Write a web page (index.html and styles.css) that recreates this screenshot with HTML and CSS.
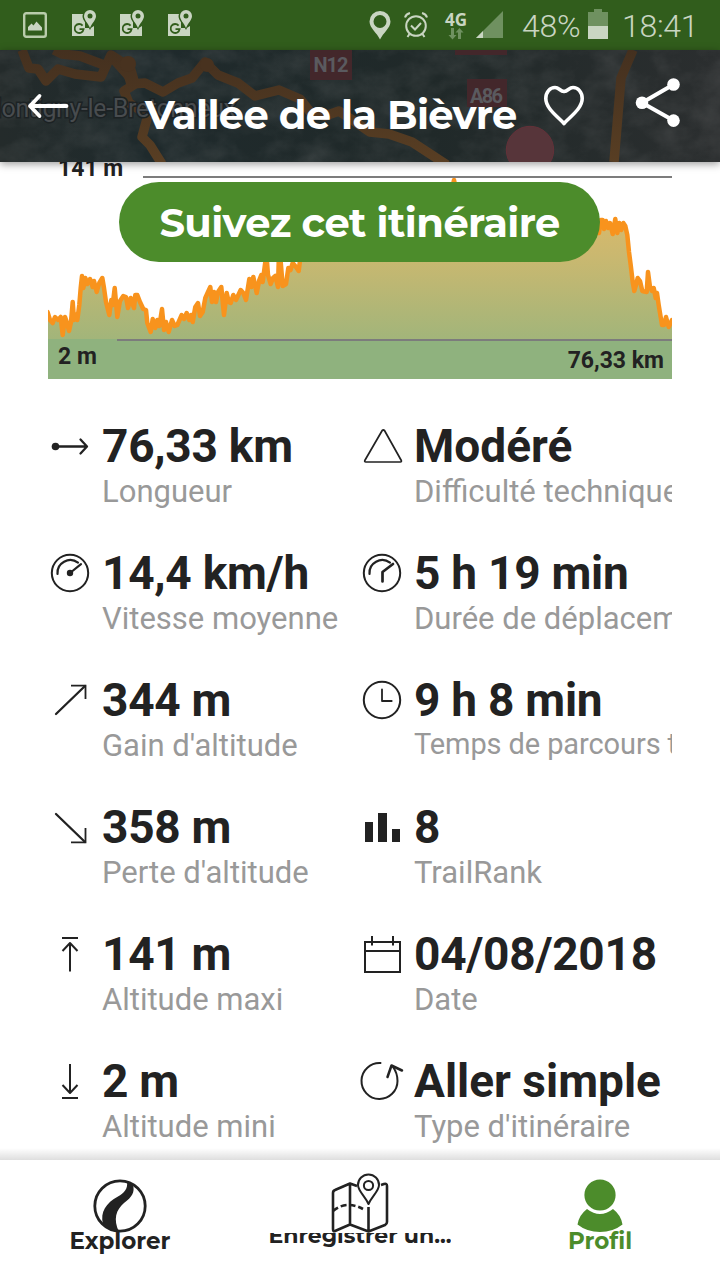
FILE: index.html
```html
<!DOCTYPE html>
<html lang="fr">
  <head>
    <meta charset="UTF-8" />
    <meta name="viewport" content="width=device-width, initial-scale=1.0" />
    <title>Vallée de la Bièvre</title>
    <link rel="stylesheet" href="styles.css">
  </head>
  <body>
    <div class="status-bar">
      <div class="status-left">
        <svg class="photo-icon" width="24" height="26" viewBox="0 0 24 26">
          <rect x="1.2" y="1.2" width="21.6" height="23.6" rx="2" fill="none" stroke="#b9ccab" stroke-width="2.4" />
          <path d="M5 18.500V15l3.500-3.500 2 2 3-4 5.500 6v3z" fill="#c9d5c2" />
        </svg>
        <svg class="maps-icon" width="24" height="27" viewBox="0 0 24 27"><use href="#gmaps" /></svg>
        <svg class="maps-icon" width="24" height="27" viewBox="0 0 24 27"><use href="#gmaps" /></svg>
        <svg class="maps-icon" width="24" height="27" viewBox="0 0 24 27">
          <g id="gmaps">
            <path d="M0 4h13v14h9v8H0zM22 16v3h-5z" fill="#c9d5c2" />
            <path d="M18 -1.500a7.500 7.500 0 0 1 7.500 7.500c0 5-5 8-7.500 14-2.500-6-7.500-9-7.500-14a7.500 7.500 0 0 1 7.500-7.500z" fill="#315d1c" />
            <path d="M10.600 15.600a4.500 4.500 0 1 0 1 3.600H7.500" fill="none" stroke="#315d1c" stroke-width="1.800" />
            <path d="M18 0a6 6 0 0 1 6 6c0 4-4 7-6 12-2-5-6-8-6-12a6 6 0 0 1 6-6z" fill="#c9d5c2" />
            <circle cx="18" cy="6" r="2.500" fill="#315d1c" />
          </g>
        </svg>
      </div>
      <div class="status-right">
        <svg class="pin-icon" width="22" height="29" viewBox="0 0 22 29">
          <path d="M11 0a10.500 10.500 0 0 1 10.500 10.500C21.500 17 14 22 11 28.500 8 22 .5 17 .5 10.500A10.500 10.500 0 0 1 11 0zM11 4a6.500 6.500 0 1 0 0 13 6.500 6.500 0 0 0 0-13z" fill="#c9d5c2" />
        </svg>
        <svg class="alarm-icon" width="24" height="26" viewBox="0 0 24 26" fill="none" stroke="#c9d5c2" stroke-width="2">
          <circle cx="12" cy="14" r="9.800" />
          <path d="M7 13.500l4 4 6-6.500M1 5.500Q2 2 6 1M23 5.500Q22 2 18 1M5.500 22l-2 3M18.500 22l2 3" />
        </svg>
        <div class="network">
          <span>4G</span>
          <svg width="16" height="12" viewBox="0 0 16 12" fill="#6f9160">
            <path d="M3 0h3v7h2.500l-4 4.500L.5 7H3zM10 11V4.500H7.500l4-4.500 4 4.500H13V11z" />
          </svg>
        </div>
        <svg class="signal-icon" width="28" height="27" viewBox="0 0 28 27">
          <path d="M27 0v27H0z" fill="#6f9160" />
          <path d="M7 20v7H0z" fill="#c9d5c2" />
        </svg>
        <span class="battery-text">48%</span>
        <svg class="battery-icon" width="20" height="30" viewBox="0 0 20 30">
          <path d="M6 0h8v3h6v14H0V3h6z" fill="#6f9160" />
          <path d="M0 17h20v13H0z" fill="#c9d5c2" />
        </svg>
        <span class="clock">18:41</span>
      </div>
    </div>

    <header class="header">
      <svg class="map" width="720" height="112" viewBox="0 50 720 112">
        <defs>
          <linearGradient id="land" x1="0" x2="1" y1="0" y2="0">
            <stop offset="0" stop-color="#242b2b" />
            <stop offset=".2" stop-color="#1f2a2c" />
            <stop offset=".6" stop-color="#202929" />
            <stop offset="1" stop-color="#2b2e2f" />
          </linearGradient>
          <linearGradient id="road" gradientUnits="userSpaceOnUse" x1="0" x2="0" y1="50" y2="162">
            <stop offset="0" stop-color="#44301f" />
            <stop offset="1" stop-color="#583e23" />
          </linearGradient>
          <filter id="ground" x="0" y="0" width="100%" height="100%">
            <feTurbulence type="fractalNoise" baseFrequency=".03 .04" numOctaves="5" seed="8" />
            <feColorMatrix values="0 0 0 0 .25  0 0 0 0 .25  0 0 0 0 .25  1.200 0 0 0 -.4" />
          </filter>
        </defs>
        <rect y="50" width="720" height="112" fill="url(#land)" />
        <rect y="50" width="720" height="112" filter="url(#ground)" opacity=".28" />
        <g fill="none" stroke="url(#road)" stroke-width="9.500" stroke-linejoin="round">
          <path d="M22 50l7 18 9 1 8 12 12-12 17 5 26 3 10-22 14 9 6 20 14-1 18 9 15-9 14-5 13-16 13 13 20 8 17 13 24-6 21 9 11 14 14 3 14-5 31 21 19 2 23 8 35 23" />
          <path d="M54 50l8 4 18 2 24 9M128 60l7 24-11 7 5 12 19 12-6 22 8 8 12 19M110 55l24 27" />
          <path d="M633 50l-12 28-7 84" />
        </g>
        <circle cx="128" cy="64" r="8" fill="#48321f" />
        <circle cx="207" cy="65" r="7" fill="#48321f" />
        <text class="map-town" x="-20" y="117" textLength="256">Montigny-le-Bretonneux</text>
        <path d="M310 50h42v30h-42zM455 50h52v5h-52zM467 79h40v28h-40z" fill="#43272b" />
        <text class="map-road" x="313.500" y="72" textLength="35">N12</text>
        <text class="map-road" x="470" y="103" textLength="33">A86</text>
        <circle cx="530" cy="150" r="23.700" fill="#57353a" stroke="#643139" />
      </svg>
      <div class="header-content">
        <svg class="back" width="42" height="26" viewBox="0 0 42 26" fill="none" stroke="#fff" stroke-width="3.800" stroke-linecap="round" stroke-linejoin="round">
          <path d="M39.500 13H3M12.500 3L3 13l9.500 10" />
        </svg>
        <h1>Vallée de la Bièvre</h1>
        <svg class="heart" width="42" height="42" viewBox="0 0 42 42" fill="none" stroke="#fff" stroke-width="3.600" stroke-linejoin="round">
          <path d="M21 38.500C16 32.500 2.800 24 2.800 13.500 2.800 7 7 2.500 12 2.500c4 0 5 3.500 9 4 4-.5 5-4 9-4 5 0 9.200 4.500 9.200 11C39.200 24 26 32.500 21 38.500z" />
        </svg>
        <svg class="share" width="46" height="50" viewBox="0 0 46 50" fill="#fff">
          <path d="M38.500 7.500L7 25.800l31.500 17.800" fill="none" stroke="#fff" stroke-width="4" />
          <circle cx="38.500" cy="7.500" r="6.300" />
          <circle cx="7" cy="25.800" r="6.300" />
          <circle cx="38.500" cy="43.600" r="6.300" />
        </svg>
      </div>
    </header>

    <main class="content">
      <div class="profile">
        <svg class="chart" width="624" height="217" viewBox="48 162 624 217">
          <defs>
            <linearGradient id="elevation" gradientUnits="userSpaceOnUse" x1="0" x2="0" y1="177" y2="339">
              <stop offset="0" stop-color="#e8b966" />
              <stop offset=".5" stop-color="#c9b870" />
              <stop offset="1" stop-color="#a2b57a" />
            </linearGradient>
          </defs>
          <!-- closes below and beside the view, so only the profile line shows -->
          <path fill="url(#elevation)" stroke="#f8931d" stroke-width="4.500" stroke-linejoin="round" d="M40 312H47.500L50 320 52.700 323 55 317 58 320 60.700 317 62.700 335 65 317 66.700 322 69 331 71 322 72.700 302 74 320 76 315 77.300 320 79.300 305 80.700 288 82 276 83.300 288 85.300 278 87.300 284 90 279 92.700 287 94 281 96.700 292 99.300 283 102.300 278 104 288 106 302 109.300 315 111.300 300 112.700 305 114.700 288 117.300 317 120 301 123.300 296 126 297 128 308 130.700 298 134 308 135.300 295 137.300 295 140 302 143.300 309 146 310 147.300 323 150.700 332 152.700 319 155.300 328 157.300 320 159.300 326 162 309 164 330 166 322 168.700 332 172 320 174.700 326 177.300 325 181.700 315 184 319 186.700 313 189.300 320 191 315 192.700 322 195.300 307 198 303 200 316 202.700 312 205.300 298 208 292 210.300 287 212 302 214 292 216 302 218 292 221.300 287 224 315 226.700 293 228.700 302 230.700 303 233.300 295 236 300 240.700 290 243.300 293 246 300 249.300 279 251.300 287 253.300 277 256.700 293 259.300 280 261.300 275 262.700 282 265.300 262 266.700 258 268 275 270.700 284 273 278 275.300 276 278 287 278.700 262 280.700 262 282.700 286 286 284 288.300 268 290.500 270 292.700 263 296 267 298.700 271 300.700 255 400 225 450 200 454 180 458 200 560 230 599 233 600.700 220 602.700 220 604 229 606 221 608 228 610 223 612.700 234 615.300 219 617.300 233 619.300 223 621.300 230 623.300 223 625.300 226 627.300 235 629 252 630.700 265 632.700 282 634.300 291 636 285 637.700 278 640 281 642.300 291 646.700 292 648 272 650 287 652 291 653.700 288 655.700 298 657 293 658.700 305 660 313 662 325 664 325 666 317 668.700 327 672 320H680V400H40z" />
          <path fill="#8fb27e" d="M48 339h624v40H48z" />
          <path d="M143 177h529M117 340h555" stroke="#7c7c7c" stroke-width="2" />
          <text class="chart-label" x="58" y="176">141 m</text>
          <text class="chart-label" x="58" y="364">2 m</text>
          <text class="chart-label" x="664" y="368" text-anchor="end">76,33 km</text>
        </svg>
        <button class="follow">Suivez cet itinéraire</button>
      </div>

      <div class="stats">
        <div class="stat">
          <svg class="icon" viewBox="0 0 44 56"><circle cx="7.500" cy="27.500" r="3.800" fill="#222" stroke="none" /><path d="M8 27.500h30.500M32.500 20.500l6.500 7-6.500 7" stroke-width="2.300" /></svg>
          <div class="info"><strong>76,33 km</strong><span>Longueur</span></div>
        </div>
        <div class="stat">
          <svg class="icon" viewBox="0 0 44 56"><path d="M22.200 11.500L4.800 41.500q-.5 1.500 1 1.500h34.500q1.500 0 1-1.500L24.500 11.500q-1.200-1-2.300 0z" stroke-width="1.700" /></svg>
          <div class="info"><strong class="word">Modéré</strong><span>Difficulté technique</span></div>
        </div>
        <div class="stat">
          <svg class="icon" viewBox="0 0 44 56"><circle cx="22" cy="27" r="18.200" /><circle cx="22" cy="27" r="3.200" fill="#222" stroke="none" /><path d="M9.500 28A12.800 12.800 0 0 1 30 16.700M22 27l11-8.800" stroke-width="2.200" /></svg>
          <div class="info"><strong>14,4 km/h</strong><span>Vitesse moyenne</span></div>
        </div>
        <div class="stat">
          <svg class="icon" viewBox="0 0 44 56"><circle cx="22" cy="27" r="18.200" /><path d="M9.500 28A12.800 12.800 0 0 1 30 16.700" stroke-width="2.200" /><path d="M22.500 35.500v-9.500l10.500-8" stroke-width="2.700" /></svg>
          <div class="info"><strong>5 h 19 min</strong><span>Durée de déplacement</span></div>
        </div>
        <div class="stat">
          <svg class="icon" viewBox="0 0 44 56"><path d="M8 41L37 13" stroke-width="2.300" /><path d="M23 12.700h14.500V26" stroke-linejoin="miter" stroke-linecap="butt" stroke-width="1.800" /></svg>
          <div class="info"><strong>344 m</strong><span>Gain d'altitude</span></div>
        </div>
        <div class="stat">
          <svg class="icon" viewBox="0 0 44 56"><circle cx="22" cy="27" r="18.200" /><path d="M22 16.500v11.500h9.700" stroke-width="1.800" /></svg>
          <div class="info small"><strong>9 h 8 min</strong><span>Temps de parcours total</span></div>
        </div>
        <div class="stat">
          <svg class="icon" viewBox="0 0 44 56"><path d="M8 14L37 42" stroke-width="2.300" /><path d="M37.500 28v14.300H23" stroke-linejoin="miter" stroke-linecap="butt" stroke-width="1.800" /></svg>
          <div class="info"><strong>358 m</strong><span>Perte d'altitude</span></div>
        </div>
        <div class="stat">
          <svg class="icon" viewBox="0 0 44 56"><path d="M5 22h8v20H5zM18 13h9v29h-9zM32 29h8v13h-8z" fill="#222" stroke="none" /></svg>
          <div class="info"><strong>8</strong><span>TrailRank</span></div>
        </div>
        <div class="stat">
          <svg class="icon" viewBox="0 0 44 56"><path d="M14 11h16M22 16.500V44.500M14.500 24l7.500-8 7.500 8" stroke-linecap="butt" /></svg>
          <div class="info"><strong>141 m</strong><span>Altitude maxi</span></div>
        </div>
        <div class="stat">
          <svg class="icon" viewBox="0 0 44 56"><path d="M5 15h35v30H5zM5 24h35M12 9v9.500M33 9v9.500" stroke-linecap="butt" stroke-linejoin="miter" /></svg>
          <div class="info"><strong>04/08/2018</strong><span>Date</span></div>
        </div>
        <div class="stat">
          <svg class="icon" viewBox="0 0 44 56"><path d="M14 44h16M22 10V38.500M14.500 31l7.500 8 7.500-8" stroke-linecap="butt" /></svg>
          <div class="info"><strong>2 m</strong><span>Altitude mini</span></div>
        </div>
        <div class="stat">
          <svg class="icon" viewBox="0 0 44 56"><path d="M20.500 9A18 18 0 1 0 37.500 27Q37.500 19 33 13" /><path d="M27.500 23l4-11.500 10.500 5" stroke-width="2.500" /></svg>
          <div class="info"><strong class="word">Aller simple</strong><span>Type d'itinéraire</span></div>
        </div>
      </div>
    </main>

    <nav class="bottom-nav">
      <a class="tab">
        <svg width="54" height="54" viewBox="0 0 54 54">
          <circle cx="27" cy="27" r="25.200" fill="none" stroke="#222" stroke-width="2.800" />
          <path d="M34 3C35 10 31 14 25 17.500 13 24 7 33 10 45q5 7 16 8c-6-13-3-22 5-29 8-6 11-11 9-18z" fill="#222" />
        </svg>
        <span>Explorer</span>
      </a>
      <a class="tab record">
        <svg width="58" height="60" viewBox="0 0 58 60" fill="none" stroke="#222" stroke-width="2.600" stroke-linejoin="round">
          <path d="M26 13l-7-2.500L4 17q-2 .8-2 3v36q0 3 2 2l15-6.500 18.500 7L54 52q2-1 2-3V13q0-3-3-2l-3 1M19 11v41M37.500 34v24" />
          <path d="M2 38q13-11 30-2" stroke-dasharray="6 3" />
          <path d="M37.500 31C34 23 27 18 27 12a10.500 10.500 0 0 1 21 0c0 6-7 11-10.500 19z" stroke-width="2" />
          <circle cx="37.500" cy="12.500" r="4.600" stroke-width="2" />
        </svg>
        <span>Enregistrer un...</span>
      </a>
      <a class="tab active">
        <svg width="46" height="54" viewBox="0 0 46 54" fill="#4c8c2b">
          <circle cx="23" cy="16" r="15.600" />
          <path d="M10 30q13 10 26 0 8 6 9.500 15.500Q36 53 23 53T.5 45.500Q2 36 10 30z" />
        </svg>
        <span>Profil</span>
      </a>
    </nav>
  </body>
</html>
```
FILE: styles.css
```css
* {
  margin: 0;
  padding: 0;
  box-sizing: border-box;
}

body {
  font-family: Roboto, "Noto Sans", sans-serif;
  display: flex;
  flex-direction: column;
  width: 720px;
  height: 1280px;
  overflow: hidden;
  background-color: #fff;
  color: #222;
}

svg {
  display: block;
  flex-shrink: 0;
}

/* status bar */
.status-bar {
  display: flex;
  justify-content: space-between;
  height: 50px;
  background-color: #315d1c;
  color: #c9d5c2;
}

.status-left,
.status-right {
  display: flex;
  align-items: flex-start;
}

.photo-icon {
  margin: 12px 1px 0 23px;
}

.maps-icon {
  margin: 10px 0 0 24px;
}

.status-right {
  padding-right: 21px;
}

.pin-icon {
  margin-top: 11px;
}

.alarm-icon {
  margin: 12px 0 0 13px;
}

.network {
  display: flex;
  flex-direction: column;
  align-items: center;
  width: 24px;
  margin: 11px 8px 0 16px;
  font: bold 17px/17px "Open Sans", sans-serif;
}

.signal-icon {
  margin-top: 11px;
}

.battery-text,
.clock {
  font-size: 32px;
  font-weight: 350;
  line-height: 52px;
  letter-spacing: -0.3px;
}

.battery-text {
  width: 58px;
  margin: 0 8px 0 18px;
}

.battery-icon {
  margin-top: 9px;
}

.clock {
  width: 77px;
  margin-left: 14px;
}

/* header over the map */
.header {
  position: relative;
  z-index: 1;
  height: 112px;
  background-color: #222b2b;
  box-shadow: 0 2px 8px rgba(0, 0, 0, 0.4);
}

.map {
  position: absolute;
  top: 0;
  left: 0;
}

.map-town {
  font-size: 25px;
  fill: #484c4f;
  stroke: #1c2224;
  stroke-width: 3px;
  paint-order: stroke;
}

.map-road {
  font-size: 20px;
  font-weight: 700;
  fill: #5a5a5f;
}

.header-content {
  position: relative;
  display: flex;
  align-items: flex-start;
  padding-left: 27px;
}

.back {
  margin-top: 43px;
}

.header h1 {
  width: 373px;
  margin: 40px 0 0 76px;
  font: 700 40px/50px Montserrat, Inter, sans-serif;
  letter-spacing: -0.65px;
  color: #fff;
  white-space: nowrap;
}

.heart {
  margin: 35px 0 0 25px;
}

.share {
  margin: 27px 0 0 50px;
}

/* elevation profile */
.content {
  height: 998px;
  padding: 0 48px;
  overflow: hidden;
}

.profile {
  position: relative;
  height: 217px;
}

.chart-label {
  font-size: 23px;
  font-weight: 700;
  fill: #222;
}

.follow {
  position: absolute;
  top: 20px;
  left: 71px;
  width: 481px;
  height: 80px;
  border: none;
  border-radius: 40px;
  background-color: #4c8c2b;
  color: #fff;
  font: 700 40px Montserrat, Inter, sans-serif;
  letter-spacing: -0.6px;
  white-space: nowrap;
}

/* stats */
.stats {
  display: grid;
  grid-template-columns: 312px 312px;
  row-gap: 36px;
  margin-top: 40px;
}

.stat {
  display: flex;
  height: 91px;
  overflow: hidden;
}

.icon {
  width: 44px;
  height: 56px;
  margin-right: 10px;
  fill: none;
  stroke: #222;
  stroke-width: 2;
  stroke-linecap: round;
  stroke-linejoin: round;
}

.info {
  display: flex;
  flex-direction: column;
  white-space: nowrap;
}

.info strong {
  font-size: 46px;
  line-height: 54px;
  letter-spacing: -0.25px;
}

.info strong.word {
  letter-spacing: 0;
}

.info span {
  margin-top: 1px;
  font-size: 31px;
  line-height: 36px;
  color: #999;
}

.info.small span {
  margin-top: 0;
  font-size: 29px;
  line-height: 34px;
  letter-spacing: -0.1px;
}

/* bottom navigation */
.bottom-nav {
  position: relative;
  display: flex;
  height: 120px;
  background-color: #fff;
}

.bottom-nav::before {
  content: "";
  position: absolute;
  top: -12px;
  left: 0;
  right: 0;
  height: 12px;
  background: linear-gradient(rgba(0, 0, 0, 0), rgba(0, 0, 0, 0.13));
}

.tab {
  display: flex;
  flex-direction: column;
  align-items: center;
  width: 240px;
  padding-top: 19px;
  font: 700 23px/28px Montserrat, Inter, sans-serif;
  white-space: nowrap;
}

.tab span {
  margin-top: -6px;
}

.record {
  padding-top: 13px;
}

.record span {
  height: 18px;
  margin-top: 0;
  font-size: 22px;
  line-height: 6px;
  overflow: hidden;
}

.active {
  color: #4c8c2b;
}
```
